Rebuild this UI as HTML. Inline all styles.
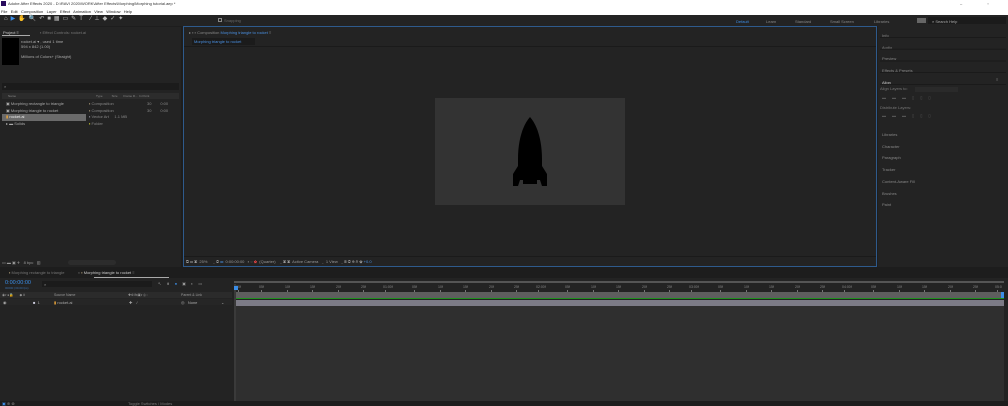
<!DOCTYPE html>
<html><head><style>
*{margin:0;padding:0;box-sizing:border-box}
body{width:1008px;height:406px;background:#1d1d1d;font-family:"Liberation Sans",sans-serif;font-size:4px;color:#9a9a9a;position:relative;overflow:hidden}
.a{position:absolute}
.t{position:absolute;white-space:nowrap;font-size:4px;line-height:5px}
.r{position:absolute;top:285px;font-size:3.5px;color:#888;white-space:nowrap}
.r:after{content:"";position:absolute;left:2px;top:5px;width:1px;height:2px;background:#777}
</style></head><body>
<!-- title + menu -->
<div class="a" style="left:0;top:0;width:1008px;height:15px;background:#fff"></div>
<div class="a" style="left:1px;top:1px;width:5px;height:5px;background:#2a0b5e"></div>
<div class="t" style="left:8px;top:1px;color:#333">Adobe After Effects 2020 - D:\RAVI 2020\WORK\After Effects\Morphing\Morphing tutorial.aep *</div>
<div class="t" style="left:1px;top:9px;color:#222">File&nbsp;&nbsp; Edit&nbsp;&nbsp; Composition&nbsp;&nbsp; Layer&nbsp;&nbsp; Effect&nbsp;&nbsp; Animation&nbsp;&nbsp; View&nbsp;&nbsp; Window&nbsp;&nbsp; Help</div>
<div class="t" style="left:960px;top:1px;color:#333;letter-spacing:12px">– ▫ ×</div>
<!-- toolbar -->
<div class="a" style="left:0;top:15px;width:1008px;height:11px;background:#232323"></div>
<div class="t" style="left:4px;top:17px;color:#bbb;font-size:6px;letter-spacing:3px">⌂<span style="color:#3b8ee8">▶</span>✋🔍↶■▦▭✎T ⁄⊥◆✓✦</div>
<div class="a" style="left:218px;top:18px;width:4px;height:4px;border:1px solid #888"></div>
<div class="t" style="left:224px;top:18px;color:#666">Snapping</div>
<div class="t" style="left:736px;top:19px;color:#3b8ee8">Default</div>
<div class="t" style="left:766px;top:19px;color:#888">Learn</div>
<div class="t" style="left:795px;top:19px;color:#888">Standard</div>
<div class="t" style="left:830px;top:19px;color:#888">Small Screen</div>
<div class="t" style="left:874px;top:19px;color:#888">Libraries</div>
<div class="a" style="left:917px;top:18px;width:9px;height:5px;background:#666"></div>
<div class="a" style="left:928px;top:17px;width:78px;height:7px;background:#1b1b1b"></div>
<div class="t" style="left:932px;top:19px;color:#aaa">⌕ Search Help</div>
<!-- project panel -->
<div class="a" style="left:0;top:27px;width:181px;height:240px;background:#232323"></div>
<div class="t" style="left:3px;top:30px;color:#ccc">Project ≡</div>
<div class="a" style="left:2px;top:35px;width:28px;height:1px;background:#aaa"></div>
<div class="t" style="left:40px;top:30px;color:#777">▪ Effect Controls: rocket.ai</div>
<div class="a" style="left:2px;top:38px;width:17px;height:27px;background:#000"></div>
<div class="t" style="left:21px;top:39px;color:#aaa">rocket.ai ▾ , used 1 time<br>594 x 842 (1.00)<br><br>Millions of Colors+ (Straight)</div>
<div class="a" style="left:2px;top:83px;width:177px;height:7px;background:#1b1b1b"></div>
<div class="t" style="left:4px;top:84px;color:#888">⌕</div>
<div class="a" style="left:2px;top:93px;width:177px;height:6px;background:#2c2c2c"></div>
<div class="t" style="left:8px;top:94px;font-size:3px;color:#888">Name</div>
<div class="t" style="left:96px;top:94px;font-size:3px;color:#888">Type&nbsp;&nbsp;&nbsp;&nbsp;&nbsp;&nbsp;&nbsp;&nbsp;&nbsp;&nbsp; Size&nbsp;&nbsp;&nbsp;&nbsp;&nbsp;&nbsp; Frame R...&nbsp; In Point</div>
<div class="a" style="left:2px;top:114px;width:84px;height:7px;background:#6a6a6a"></div>
<div class="t" style="left:6px;top:101px;color:#aaa;line-height:6.5px">▣ Morphing rectangle to triangle<br>▣ Morphing triangle to rocket<br><span style="color:#e8a33a">▮</span> <span style="color:#eee">rocket.ai</span><br>▸ ▬ Solids</div>
<div class="t" style="left:89px;top:101px;color:#888;line-height:6.5px"><span style="color:#c9b48a">▪</span> Composition<br><span style="color:#c9b48a">▪</span> Composition<br><span style="color:#aab">▪</span> Vector Art&nbsp;&nbsp;&nbsp;&nbsp; 1.1 MB<br><span style="color:#ee3">▪</span> Folder</div>
<div class="t" style="left:147px;top:101px;color:#888;line-height:6.5px">30&nbsp;&nbsp;&nbsp;&nbsp;&nbsp;&nbsp;&nbsp; 0:00<br>30&nbsp;&nbsp;&nbsp;&nbsp;&nbsp;&nbsp;&nbsp; 0:00</div>
<div class="a" style="left:0;top:258px;width:181px;height:8px;background:#232323"></div>
<div class="t" style="left:2px;top:260px;color:#999">▭ ▬ ▣ ✈&nbsp;&nbsp; 8 bpc&nbsp;&nbsp; ▥</div>
<div class="a" style="left:68px;top:260px;width:48px;height:5px;background:#2c2c2c;border-radius:3px"></div>
<!-- comp panel -->
<div class="a" style="left:183px;top:26px;width:694px;height:241px;background:#232323;border:1px solid #2e5a8c"></div>
<div class="t" style="left:189px;top:30px;color:#888">▸ ▪ ▪ Composition <span style="color:#4a90e2">Morphing triangle to rocket</span> ≡</div>
<div class="a" style="left:192px;top:38px;width:63px;height:7px;background:#1b1b1b"></div>
<div class="t" style="left:194px;top:39px;color:#4a90e2">Morphing triangle to rocket</div>
<div class="a" style="left:184px;top:46px;width:692px;height:1px;background:#1a1a1a"></div>
<div class="a" style="left:435px;top:98px;width:190px;height:107px;background:#333"></div>
<svg class="a" style="left:510px;top:114px" width="40" height="76" viewBox="0 0 40 76">
<path d="M20 3 C12 12 8 28 8 45 L8 52 L3 60 L3 72 L8 72 L10 66 L13 66 L13 70 L27 70 L27 66 L30 66 L32 72 L37 72 L37 60 L32 52 L32 45 C32 28 28 12 20 3Z" fill="#000"/>
</svg>
<div class="a" style="left:184px;top:256px;width:692px;height:10px;background:#232323;border-top:1px solid #1a1a1a"></div>
<div class="t" style="left:186px;top:259px;color:#999">⧉ ▭ ▣&nbsp; 25%&nbsp;&nbsp;&nbsp;&nbsp; ⌄ ◎ <span style="color:#4a90e2">▭</span>&nbsp; 0:00:00:00&nbsp;&nbsp; ▪ ◌ <span style="color:#e44">✿</span>&nbsp; (Quarter)&nbsp;&nbsp;&nbsp; ⌄ ▣ ▣&nbsp; Active Camera&nbsp;&nbsp; ⌄&nbsp; 1 View&nbsp;&nbsp; ⌄ ⊞ ◎ ⊕ ⋔ ✿ <span style="color:#4a90e2">+0.0</span></div>
<!-- right panels -->
<div class="a" style="left:878px;top:26px;width:130px;height:241px;background:#232323"></div>
<div class="t" style="left:882px;top:30px;color:#888;line-height:11.7px">Info<br>Audio<br>Preview<br>Effects &amp; Presets<br><span style="color:#ccc">Align</span></div>
<div class="t" style="left:996px;top:77px;color:#888">≡</div>
<div class="t" style="left:880px;top:87px;color:#777;line-height:4.7px">Align Layers to:<br><br><br><br>Distribute Layers:</div>
<div class="a" style="left:915px;top:87px;width:43px;height:5px;background:#2a2a2a"></div>
<div class="t" style="left:882px;top:95px;color:#555;letter-spacing:6px">▬▬▬▯▯▯</div>
<div class="t" style="left:882px;top:113px;color:#555;letter-spacing:6px">▬▬▬▯▯▯</div>
<div class="t" style="left:882px;top:129px;color:#888;line-height:11.7px">Libraries<br>Character<br>Paragraph<br>Tracker<br>Content-Aware Fill<br>Brushes<br>Paint</div>
<div class="a" style="left:880px;top:37px;width:126px;height:1px;background:#1a1a1a;box-shadow:0 11.7px #1a1a1a,0 23.4px #1a1a1a,0 35px #1a1a1a,0 47px #1a1a1a"></div>
<!-- timeline tabs -->
<div class="a" style="left:0;top:268px;width:1008px;height:10px;background:#1d1d1d"></div>
<div class="t" style="left:9px;top:270px;color:#777"><span style="color:#c9b48a">▪</span> Morphing rectangle to triangle&nbsp;&nbsp;&nbsp;&nbsp;&nbsp;&nbsp;&nbsp;&nbsp;&nbsp;&nbsp;&nbsp; × <span style="color:#c9b48a">▪</span> <span style="color:#ccc">Morphing triangle to rocket</span> ≡</div>
<div class="a" style="left:94px;top:277px;width:75px;height:1px;background:#aaa"></div>
<!-- timeline left -->
<div class="a" style="left:0;top:278px;width:232px;height:123px;background:#232323"></div>
<div class="t" style="left:5px;top:280px;color:#3b8ee8;font-size:5.5px;line-height:6px">0:00:00:00</div>
<div class="t" style="left:5px;top:286px;color:#3b6ea8;font-size:3px">00000 (30.00 fps)</div>
<div class="a" style="left:42px;top:281px;width:110px;height:6px;background:#1b1b1b"></div>
<div class="t" style="left:44px;top:282px;color:#888">⌕</div>
<div class="t" style="left:158px;top:281px;color:#999;letter-spacing:5px">↖⋔<span style="color:#3b8ee8">●</span>▣◐▭</div>
<div class="a" style="left:0;top:292px;width:232px;height:6px;background:#2b2b2b"></div>
<div class="t" style="left:2px;top:293px;font-size:3.5px;color:#999">◉◐●🔒&nbsp;&nbsp;&nbsp;&nbsp;&nbsp; ◆ #</div>
<div class="t" style="left:54px;top:293px;font-size:3.5px;color:#999">Source Name</div>
<div class="t" style="left:128px;top:293px;font-size:3.5px;color:#999">✚✲\fx▣◐◎◌</div>
<div class="t" style="left:181px;top:293px;font-size:3.5px;color:#999">Parent &amp; Link</div>
<div class="a" style="left:0;top:299px;width:232px;height:6px;background:#262626"></div>
<div class="t" style="left:3px;top:300px;color:#aaa">◉</div>
<div class="t" style="left:33px;top:300px;color:#aaa"><span style="color:#ccd">■</span>&nbsp; 1</div>
<div class="t" style="left:54px;top:300px;color:#aaa"><span style="color:#e8a33a">▮</span> rocket.ai</div>
<div class="t" style="left:129px;top:300px;color:#aaa">✚&nbsp;&nbsp;&nbsp; ⁄</div>
<div class="t" style="left:181px;top:300px;color:#aaa">◎&nbsp;&nbsp; None</div>
<div class="t" style="left:221px;top:300px;color:#aaa">⌄</div>
<!-- timeline right -->
<div class="a" style="left:232px;top:278px;width:776px;height:128px;background:#232323"></div>
<div class="a" style="left:234px;top:281px;width:770px;height:2px;background:#555"></div>
<span class="r" style="left:236px">00f</span><span class="r" style="left:259px">05f</span><span class="r" style="left:285px">10f</span><span class="r" style="left:310px">15f</span><span class="r" style="left:336px">20f</span><span class="r" style="left:361px">25f</span><span class="r" style="left:383px">01:00f</span><span class="r" style="left:412px">05f</span><span class="r" style="left:438px">10f</span><span class="r" style="left:463px">15f</span><span class="r" style="left:489px">20f</span><span class="r" style="left:514px">25f</span><span class="r" style="left:536px">02:00f</span><span class="r" style="left:565px">05f</span><span class="r" style="left:591px">10f</span><span class="r" style="left:616px">15f</span><span class="r" style="left:642px">20f</span><span class="r" style="left:667px">25f</span><span class="r" style="left:689px">03:00f</span><span class="r" style="left:718px">05f</span><span class="r" style="left:744px">10f</span><span class="r" style="left:769px">15f</span><span class="r" style="left:795px">20f</span><span class="r" style="left:820px">25f</span><span class="r" style="left:842px">04:00f</span><span class="r" style="left:871px">05f</span><span class="r" style="left:897px">10f</span><span class="r" style="left:922px">15f</span><span class="r" style="left:948px">20f</span><span class="r" style="left:973px">25f</span><span class="r" style="left:995px">05:0</span>
<div class="a" style="left:234px;top:292px;width:770px;height:6px;background:#5e5e5e"></div>
<div class="a" style="left:234px;top:298px;width:770px;height:1px;background:#1e8f1e"></div>
<div class="a" style="left:236px;top:300px;width:768px;height:6px;background:#7c7b86"></div>
<div class="a" style="left:236px;top:306px;width:768px;height:95px;background:#2f2f2f"></div>
<div class="a" style="left:234px;top:284px;width:2px;height:120px;background:#3a3a3a"></div>
<div class="a" style="left:234px;top:286px;width:4px;height:4px;background:#3b8ee8"></div>
<div class="a" style="left:1001px;top:292px;width:3px;height:6px;background:#3b8ee8"></div>
<!-- bottom bar -->
<div class="a" style="left:0;top:401px;width:1008px;height:5px;background:#1d1d1d"></div>
<div class="t" style="left:2px;top:401px;color:#3b8ee8">▣ <span style="color:#888">⊕ ⊗</span></div>
<div class="t" style="left:128px;top:401px;color:#777">Toggle Switches / Modes</div>
</body></html>
